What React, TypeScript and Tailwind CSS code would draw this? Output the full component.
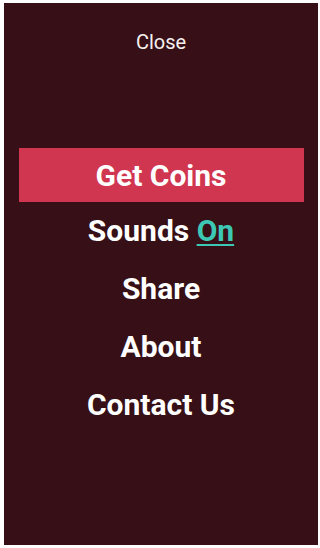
export default function App() {
  const items = ["Share", "About", "Contact Us"];
  return (
    <div className="h-[548px] w-[320px] bg-white pl-[4px] pr-[2px] pt-[3px] pb-[3px]">
      <div
        className="flex h-full flex-col items-center bg-[#361016] text-white"
        style={{ fontFamily: "Roboto, 'Liberation Sans', sans-serif" }}
      >
        <button className="mt-[25px] text-[20px] leading-[28px] text-[#f7f0f0]">Close</button>
        <div className="mt-[92px] flex w-full flex-col items-center">
          <button className="flex h-[54px] w-[285px] items-center justify-center bg-[#d13650] text-[30px] font-bold">
            Get Coins
          </button>
          <button className="mt-[2px] flex h-[52px] items-center text-[30px] font-bold">
            Sounds&nbsp;
            <span className="text-[#3cc8b4] underline decoration-2 underline-offset-[3px]">On</span>
          </button>
          {items.map((label) => (
            <button key={label} className="mt-[6px] flex h-[52px] items-center text-[30px] font-bold">
              {label}
            </button>
          ))}
        </div>
      </div>
    </div>
  );
}
